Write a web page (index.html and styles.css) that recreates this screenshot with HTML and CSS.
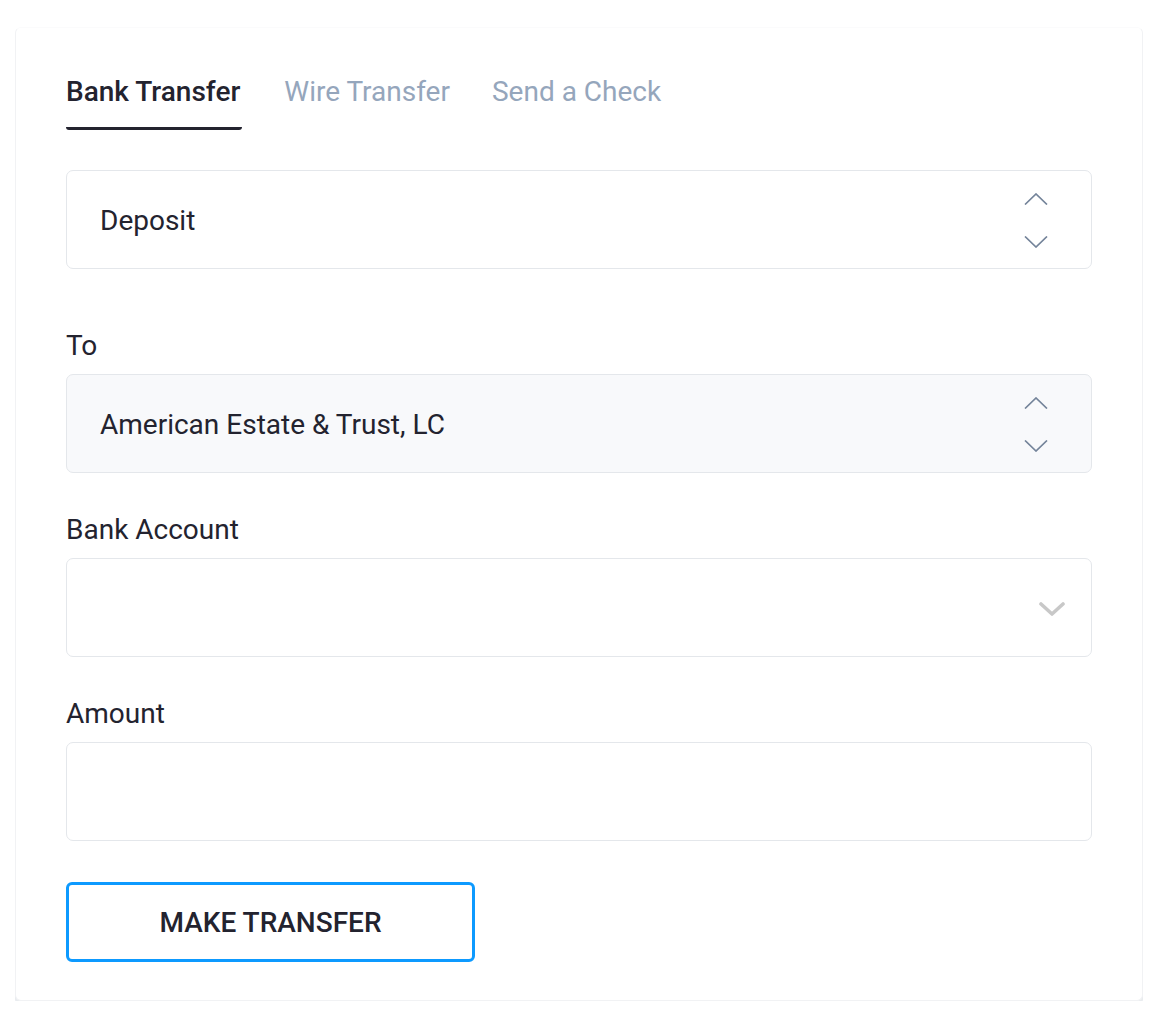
FILE: index.html
```html
<!DOCTYPE html>
<html lang="en">
<head>
    <meta charset="UTF-8">
    <meta name="viewport" content="width=device-width, initial-scale=1.0">
    <title>Make a Transfer</title>
    <link rel="stylesheet" href="styles.css">
</head>
<body>

<main class="transfer-card">
    <nav class="tabs">
        <a class="tab active" href="#">Bank Transfer</a>
        <a class="tab" href="#">Wire Transfer</a>
        <a class="tab" href="#">Send a Check</a>
    </nav>

    <div class="field type-field">
        <div class="select">
            <span class="select-value">Deposit</span>
            <span class="spinner">
                <svg width="24" height="12" viewBox="0 0 24 12"><path d="M1 11.5 L12 1 L23 11.5" /></svg>
                <svg width="24" height="12" viewBox="0 0 24 12"><path d="M1 0.5 L12 11 L23 0.5" /></svg>
            </span>
        </div>
    </div>

    <div class="field">
        <label class="field-label">To</label>
        <div class="select filled">
            <span class="select-value">American Estate &amp; Trust, LC</span>
            <span class="spinner">
                <svg width="24" height="12" viewBox="0 0 24 12"><path d="M1 11.5 L12 1 L23 11.5" /></svg>
                <svg width="24" height="12" viewBox="0 0 24 12"><path d="M1 0.5 L12 11 L23 0.5" /></svg>
            </span>
        </div>
    </div>

    <div class="field">
        <label class="field-label">Bank Account</label>
        <div class="select">
            <span class="select-value"></span>
            <span class="caret">
                <svg width="26" height="15" viewBox="0 0 26 15"><path d="M2 2 L13 12 L24 2" /></svg>
            </span>
        </div>
    </div>

    <div class="field">
        <label class="field-label">Amount</label>
        <input class="text-input" type="text">
    </div>

    <button class="transfer-btn">MAKE TRANSFER</button>
</main>

</body>
</html>
```

FILE: styles.css
```css
body {
    font-family: Roboto, "Liberation Sans", sans-serif;
    margin: 0;
    padding: 0;
    background-color: #fff;
    color: #23232f;
}

.transfer-card {
    margin: 27px 0 0 15px;
    width: 1128px;
    box-sizing: border-box;
    padding: 47px 50px 38px 50px;
    background: #fff;
    border: 1px solid #f1f2f4;
    border-top-color: #fbfbfc;
    border-radius: 6px;
    box-shadow: 0 4px 0 #e9ecef;
}

.tabs {
    display: flex;
    gap: 42px;
    margin-bottom: 40px;
}

.tab {
    font-size: 28px;
    line-height: 34px;
    color: #95a6bc;
    text-decoration: none;
    padding-bottom: 18px;
    border-bottom: 3px solid transparent;
}

.tab.active {
    color: #23232f;
    font-weight: 500;
    padding-right: 2px;
    border-bottom-color: #23232f;
    border-radius: 0 0 3px 3px;
}

.field {
    margin-bottom: 41px;
}

.type-field {
    margin-bottom: 61px;
}

.field-label {
    display: block;
    font-size: 28px;
    line-height: 32px;
    margin-bottom: 12px;
}

.select,
.text-input {
    display: flex;
    align-items: center;
    justify-content: space-between;
    box-sizing: border-box;
    width: 100%;
    height: 99px;
    padding: 0 26px 0 33px;
    border: 1px solid #e4e7eb;
    border-radius: 7px;
    background: #fff;
}

.select.filled {
    background: #f8f9fb;
}

.select-value {
    font-size: 28px;
    margin-top: 1px;
}

.spinner {
    display: flex;
    flex-direction: column;
    gap: 31px;
    margin-right: 17px;
    margin-top: 1px;
}

.spinner svg {
    display: block;
    fill: none;
    stroke: #74849a;
    stroke-width: 1.7;
}

.caret svg {
    display: block;
    fill: none;
    stroke: #c8c8c8;
    stroke-width: 3.6;
    stroke-linecap: round;
    stroke-linejoin: round;
}

.caret {
    margin-top: 3px;
}

.text-input {
    font-family: inherit;
    font-size: 28px;
    outline: none;
}

.transfer-btn {
    display: block;
    width: 409px;
    height: 80px;
    font-family: inherit;
    font-size: 28px;
    font-weight: 500;
    color: #23232f;
    background: #fff;
    border: 3px solid #0d9aff;
    border-radius: 6px;
    cursor: pointer;
}
```
